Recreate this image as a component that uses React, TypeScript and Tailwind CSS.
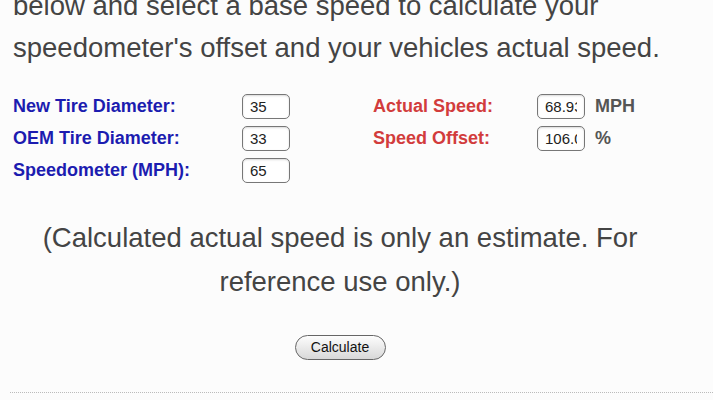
import type { ReactNode } from "react";

function Field({ value }: { value: string }) {
  return (
    <input
      readOnly
      value={value}
      className="w-[48px] h-[25px] rounded-[5px] border border-[#777] bg-white px-[7px] text-[15px] text-[#222] shadow-[inset_0_1px_2px_rgba(0,0,0,0.15)] outline-none"
    />
  );
}

function Row({
  label,
  color,
  value,
  unit,
  labelWidth,
}: {
  label: string;
  color: string;
  value: string;
  unit?: ReactNode;
  labelWidth: string;
}) {
  return (
    <div className="flex items-center h-[32px]">
      <span className={`${labelWidth} ${color} font-bold text-[18px]`}>{label}</span>
      <Field value={value} />
      {unit && <span className="ml-[10px] font-bold text-[18px] text-[#555]">{unit}</span>}
    </div>
  );
}

export default function App() {
  return (
    <div
      className="w-[713px] h-[400px] overflow-hidden bg-[#fcfcfc]"
      style={{ fontFamily: '"Liberation Sans", Arial, sans-serif' }}
    >
      <p className="-mt-[15px] px-[13px] text-[27.5px] leading-[42px] text-[#444] whitespace-nowrap">
        below and select a base speed to calculate your
        <br />
        speedometer's offset and your vehicles actual speed.
      </p>

      <div className="mt-[21px] flex px-[13px]">
        <div className="flex flex-col">
          <Row label="New Tire Diameter:" color="text-[#1c1cb0]" value="35" labelWidth="w-[229px]" />
          <Row label="OEM Tire Diameter:" color="text-[#1c1cb0]" value="33" labelWidth="w-[229px]" />
          <Row label="Speedometer (MPH):" color="text-[#1c1cb0]" value="65" labelWidth="w-[229px]" />
        </div>
        <div className="ml-[83px] flex flex-col">
          <Row label="Actual Speed:" color="text-[#d23c3c]" value="68.93" unit="MPH" labelWidth="w-[164px]" />
          <Row label="Speed Offset:" color="text-[#d23c3c]" value="106.06" unit="%" labelWidth="w-[164px]" />
        </div>
      </div>

      <div className="w-[680px]">
        <p className="mt-[30px] text-center text-[27.5px] leading-[44px] text-[#444]">
          (Calculated actual speed is only an estimate. For
          <br />
          reference use only.)
        </p>

        <div className="mt-[31px] flex justify-center">
          <button className="h-[25px] w-[91px] rounded-full border border-[#666] bg-gradient-to-b from-[#fdfdfd] to-[#d8d8d8] text-[14px] text-[#111]">
            Calculate
          </button>
        </div>
      </div>

      <div className="mt-[32px] ml-[10px] border-t border-dotted border-[#bbb]" />
    </div>
  );
}
